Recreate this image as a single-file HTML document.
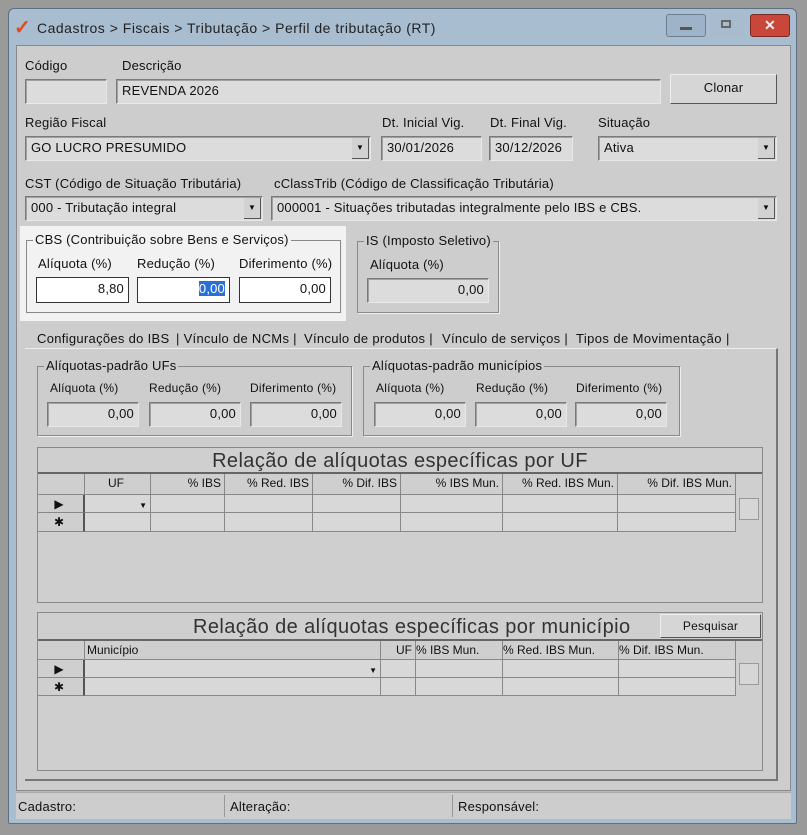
<!DOCTYPE html>
<html><head><meta charset="utf-8"><style>
*{box-sizing:border-box;margin:0;padding:0}
body{width:807px;height:835px;background:#9a9a9a;font-family:"Liberation Sans",sans-serif;font-size:13px;color:#111;position:relative;overflow:hidden;letter-spacing:0.2px}
.a{position:absolute}
.win{left:8px;top:8px;width:789px;height:816px;background:#a9bdd0;border:1px solid #5f6f80;border-radius:6px 6px 2px 2px}
.inp{position:absolute;background:#dcdcdc;border:1px solid #7a7a7a;border-right-color:#e8e8e8;border-bottom-color:#e8e8e8;box-shadow:inset 1px 1px 0 #a0a0a0;font-size:13px;line-height:22px;padding-left:5px;white-space:nowrap;overflow:hidden}
.r{text-align:right;padding-right:4px}
.dd{position:absolute;right:1px;top:1px;bottom:1px;width:17px;background:#d2d2d2;border-right:1px solid #555;border-bottom:1px solid #555;text-align:center;font-size:8px;line-height:20px}
.lbl{position:absolute;font-size:13px;white-space:nowrap}
.gb{position:absolute;border:1px solid #8a8a8a;box-shadow:1px 1px 0 #eee}
.gb span{position:absolute;top:-9px;left:6px;background:inherit;padding:0 2px;font-size:13px;white-space:nowrap}
.btn{position:absolute;background:#d6d6d6;border:1px solid #eee;border-right-color:#555;border-bottom-color:#555;text-align:center;line-height:26px}
.grid{position:absolute;border:1px solid #888;background:#cfcfcf}
.cell{position:absolute;border-right:1px solid #888;border-bottom:1px solid #888;font-size:12px;line-height:19px;text-align:right;padding-right:3px;white-space:nowrap;overflow:hidden;letter-spacing:0}
</style></head><body>
<div class="a win"></div>
<div class="a" style="left:14px;top:18px;font-size:20px;color:#e24a1a;font-weight:bold;line-height:20px">✓</div>
<div class="a" style="left:37px;top:20px;font-size:14px;color:#222;letter-spacing:0.5px">Cadastros &gt; Fiscais &gt; Tributação &gt; Perfil de tributação (RT)</div>
<div class="a" style="left:666px;top:14px;width:40px;height:23px;border:1px solid #6b7f93;border-radius:3px;background:#9fb3c8"><div class="a" style="left:13px;top:12px;width:12px;height:3px;background:#555"></div></div>
<div class="a" style="left:710px;top:14px;width:34px;height:23px;border-radius:3px;background:#a8bbcf"><div class="a" style="left:11px;top:6px;width:10px;height:8px;border:2px solid #666"></div></div>
<div class="a" style="left:750px;top:14px;width:40px;height:23px;border:1px solid #7a2a20;border-radius:3px;background:#c8473a;color:#eee;text-align:center;font-weight:bold;line-height:21px;font-size:14px">✕</div>
<div class="a" style="left:16px;top:45px;width:775px;height:746px;background:#cdcdcd;border:1px solid #8a8a8a"></div>
<div class="a" style="left:16px;top:792px;width:775px;height:27px;background:#cdcdcd;border-top:1px solid #aaa"></div>
<div class="a" style="left:224px;top:795px;width:1px;height:22px;background:#999"></div>
<div class="a" style="left:452px;top:795px;width:1px;height:22px;background:#999"></div>
<div class="lbl" style="left:18px;top:799px">Cadastro:</div>
<div class="lbl" style="left:230px;top:799px">Alteração:</div>
<div class="lbl" style="left:458px;top:799px">Responsável:</div>

<div class="lbl" style="left:25px;top:58px">Código</div>
<div class="lbl" style="left:122px;top:58px">Descrição</div>
<div class="inp" style="left:25px;top:79px;width:82px;height:25px"></div>
<div class="inp" style="left:116px;top:79px;width:545px;height:25px">REVENDA 2026</div>
<div class="btn" style="left:670px;top:74px;width:107px;height:30px">Clonar</div>

<div class="lbl" style="left:25px;top:115px">Região Fiscal</div>
<div class="lbl" style="left:382px;top:115px">Dt. Inicial Vig.</div>
<div class="lbl" style="left:490px;top:115px">Dt. Final Vig.</div>
<div class="lbl" style="left:598px;top:115px">Situação</div>
<div class="inp" style="left:25px;top:136px;width:346px;height:25px">GO LUCRO PRESUMIDO<div class="dd">▼</div></div>
<div class="inp" style="left:381px;top:136px;width:101px;height:25px">30/01/2026</div>
<div class="inp" style="left:489px;top:136px;width:84px;height:25px">30/12/2026</div>
<div class="inp" style="left:598px;top:136px;width:179px;height:25px">Ativa<div class="dd">▼</div></div>

<div class="lbl" style="left:25px;top:176px">CST (Código de Situação Tributária)</div>
<div class="lbl" style="left:274px;top:176px">cClassTrib (Código de Classificação Tributária)</div>
<div class="inp" style="left:25px;top:196px;width:238px;height:25px">000 - Tributação integral<div class="dd">▼</div></div>
<div class="inp" style="left:271px;top:196px;width:506px;height:25px">000001 - Situações tributadas integralmente pelo IBS e CBS.<div class="dd">▼</div></div>

<div class="a" style="left:20px;top:226px;width:326px;height:95px;background:#f2f2f2"></div>
<div class="gb" style="left:26px;top:240px;width:315px;height:73px;background:#f2f2f2;border-color:#888"><span>CBS (Contribuição sobre Bens e Serviços)</span></div>
<div class="lbl" style="left:38px;top:256px">Alíquota (%)</div>
<div class="lbl" style="left:137px;top:256px">Redução (%)</div>
<div class="lbl" style="left:239px;top:256px">Diferimento (%)</div>
<div class="inp r" style="left:36px;top:277px;width:93px;height:26px;background:#fff;border-color:#333;box-shadow:none">8,80</div>
<div class="inp r" style="left:137px;top:277px;width:93px;height:26px;background:#fff;border-color:#333;box-shadow:none"><span style="background:#2a6fd6;color:#fff">0,00</span></div>
<div class="inp r" style="left:239px;top:277px;width:92px;height:26px;background:#fff;border-color:#333;box-shadow:none">0,00</div>

<div class="gb" style="left:357px;top:241px;width:142px;height:72px;background:#cdcdcd"><span>IS (Imposto Seletivo)</span></div>
<div class="lbl" style="left:370px;top:257px">Alíquota (%)</div>
<div class="inp r" style="left:367px;top:278px;width:122px;height:25px">0,00</div>

<div class="a" style="left:25px;top:348px;width:753px;height:433px;border-right:2px solid #777;border-bottom:2px solid #777;border-top:1px solid #eee"></div>
<div class="lbl" style="left:37px;top:331px;letter-spacing:0.3px">Configurações do IBS</div>
<div class="lbl" style="left:176px;top:331px;letter-spacing:0.3px">| Vínculo de NCMs |</div>
<div class="lbl" style="left:304px;top:331px;letter-spacing:0.3px">Vínculo de produtos |</div>
<div class="lbl" style="left:442px;top:331px;letter-spacing:0.3px">Vínculo de serviços |</div>
<div class="lbl" style="left:576px;top:331px;letter-spacing:0.4px">Tipos de Movimentação |</div>

<div class="gb" style="left:37px;top:366px;width:315px;height:70px;background:#cdcdcd"><span>Alíquotas-padrão UFs</span></div>
<div class="lbl" style="left:50px;top:381px;font-size:12px">Alíquota (%)</div>
<div class="lbl" style="left:149px;top:381px;font-size:12px">Redução (%)</div>
<div class="lbl" style="left:250px;top:381px;font-size:12px">Diferimento (%)</div>
<div class="inp r" style="left:47px;top:402px;width:92px;height:25px">0,00</div>
<div class="inp r" style="left:149px;top:402px;width:92px;height:25px">0,00</div>
<div class="inp r" style="left:250px;top:402px;width:92px;height:25px">0,00</div>
<div class="gb" style="left:363px;top:366px;width:317px;height:70px;background:#cdcdcd"><span>Alíquotas-padrão municípios</span></div>
<div class="lbl" style="left:376px;top:381px;font-size:12px">Alíquota (%)</div>
<div class="lbl" style="left:476px;top:381px;font-size:12px">Redução (%)</div>
<div class="lbl" style="left:576px;top:381px;font-size:12px">Diferimento (%)</div>
<div class="inp r" style="left:374px;top:402px;width:92px;height:25px">0,00</div>
<div class="inp r" style="left:475px;top:402px;width:92px;height:25px">0,00</div>
<div class="inp r" style="left:575px;top:402px;width:92px;height:25px">0,00</div>

<div class="grid" style="left:37px;top:447px;width:726px;height:156px">
<div class="a" style="left:0;top:0;width:724px;height:26px;border-bottom:2px solid #666;text-align:center;font-size:20px;line-height:26px;color:#333;letter-spacing:0.4px">Relação de alíquotas específicas por UF</div>
<div class="cell" style="left:0;top:26px;width:47px;height:21px"></div>
<div class="cell" style="left:47px;top:26px;width:66px;height:21px;text-align:center">UF</div>
<div class="cell" style="left:113px;top:26px;width:74px;height:21px">% IBS</div>
<div class="cell" style="left:187px;top:26px;width:88px;height:21px">% Red. IBS</div>
<div class="cell" style="left:275px;top:26px;width:88px;height:21px">% Dif. IBS</div>
<div class="cell" style="left:363px;top:26px;width:102px;height:21px">% IBS Mun.</div>
<div class="cell" style="left:465px;top:26px;width:115px;height:21px">% Red. IBS Mun.</div>
<div class="cell" style="left:580px;top:26px;width:118px;height:21px">% Dif. IBS Mun.</div>
<div class="cell" style="left:0;top:47px;width:47px;height:18px;text-align:center;border-right:2px solid #555">▶</div>
<div class="cell" style="left:0;top:65px;width:47px;height:19px;text-align:center;border-right:2px solid #555">✱</div>
<div class="cell" style="left:47px;top:47px;width:66px;height:18px;background:#d8d8d8"><span style="font-size:8px">▼</span></div>
<div class="cell" style="left:113px;top:47px;width:74px;height:18px;background:#d8d8d8"></div><div class="cell" style="left:187px;top:47px;width:88px;height:18px;background:#d8d8d8"></div><div class="cell" style="left:275px;top:47px;width:88px;height:18px;background:#d8d8d8"></div><div class="cell" style="left:363px;top:47px;width:102px;height:18px;background:#d8d8d8"></div><div class="cell" style="left:465px;top:47px;width:115px;height:18px;background:#d8d8d8"></div><div class="cell" style="left:580px;top:47px;width:118px;height:18px;background:#d8d8d8"></div>
<div class="cell" style="left:47px;top:65px;width:66px;height:19px;background:#d8d8d8"></div><div class="cell" style="left:113px;top:65px;width:74px;height:19px;background:#d8d8d8"></div><div class="cell" style="left:187px;top:65px;width:88px;height:19px;background:#d8d8d8"></div><div class="cell" style="left:275px;top:65px;width:88px;height:19px;background:#d8d8d8"></div><div class="cell" style="left:363px;top:65px;width:102px;height:19px;background:#d8d8d8"></div><div class="cell" style="left:465px;top:65px;width:115px;height:19px;background:#d8d8d8"></div><div class="cell" style="left:580px;top:65px;width:118px;height:19px;background:#d8d8d8"></div>
<div class="a" style="left:701px;top:50px;width:20px;height:22px;border:1px solid #999;background:#d6d6d6"></div>
</div>

<div class="grid" style="left:37px;top:612px;width:726px;height:159px">
<div class="a" style="left:0;top:0;width:724px;height:28px;border-bottom:2px solid #666;font-size:20px;line-height:28px;color:#333;padding-left:155px;letter-spacing:0.4px">Relação de alíquotas específicas por município</div>
<div class="btn" style="left:622px;top:1px;width:101px;height:24px;line-height:22px;font-size:12px">Pesquisar</div>
<div class="cell" style="left:0;top:28px;width:47px;height:19px"></div>
<div class="cell" style="left:47px;top:28px;width:296px;height:19px;text-align:left;padding-left:2px">Município</div>
<div class="cell" style="left:343px;top:28px;width:35px;height:19px">UF</div>
<div class="cell" style="left:378px;top:28px;width:87px;height:19px;text-align:left">% IBS Mun.</div>
<div class="cell" style="left:465px;top:28px;width:116px;height:19px;text-align:left">% Red. IBS Mun.</div>
<div class="cell" style="left:581px;top:28px;width:117px;height:19px;text-align:left">% Dif. IBS Mun.</div>
<div class="cell" style="left:0;top:47px;width:47px;height:18px;text-align:center;border-right:2px solid #555">▶</div>
<div class="cell" style="left:0;top:65px;width:47px;height:18px;text-align:center;border-right:2px solid #555">✱</div>
<div class="cell" style="left:47px;top:47px;width:296px;height:18px;background:#d8d8d8"><span style="font-size:8px">▼</span></div>
<div class="cell" style="left:343px;top:47px;width:35px;height:18px;background:#d8d8d8"></div><div class="cell" style="left:378px;top:47px;width:87px;height:18px;background:#d8d8d8"></div><div class="cell" style="left:465px;top:47px;width:116px;height:18px;background:#d8d8d8"></div><div class="cell" style="left:581px;top:47px;width:117px;height:18px;background:#d8d8d8"></div>
<div class="cell" style="left:47px;top:65px;width:296px;height:18px;background:#d8d8d8"></div><div class="cell" style="left:343px;top:65px;width:35px;height:18px;background:#d8d8d8"></div><div class="cell" style="left:378px;top:65px;width:87px;height:18px;background:#d8d8d8"></div><div class="cell" style="left:465px;top:65px;width:116px;height:18px;background:#d8d8d8"></div><div class="cell" style="left:581px;top:65px;width:117px;height:18px;background:#d8d8d8"></div>
<div class="a" style="left:701px;top:50px;width:20px;height:22px;border:1px solid #999;background:#d6d6d6"></div>
</div>
</body></html>
